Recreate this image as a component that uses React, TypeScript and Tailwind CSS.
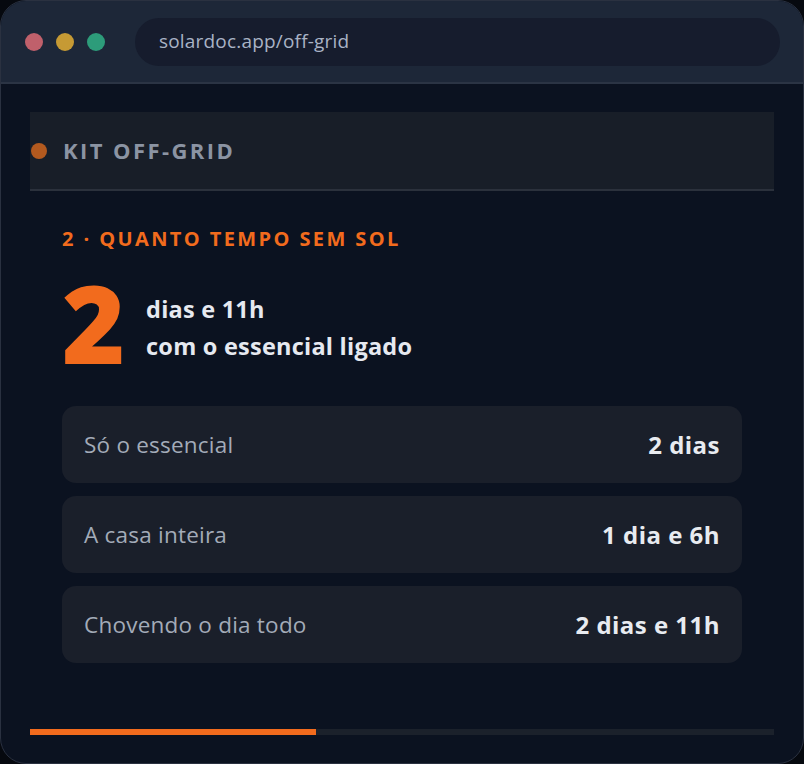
import React from "react";

const rows = [
  { label: "Só o essencial", value: "2 dias" },
  { label: "A casa inteira", value: "1 dia e 6h" },
  { label: "Chovendo o dia todo", value: "2 dias e 11h" },
];

const App = () => {
  const progress = 38.4;
  return (
    <div className="w-[804px] h-[764px] bg-[#06090f] font-['Open_Sans','Noto_Sans',sans-serif]">
      <div className="w-full h-full rounded-[26px] border border-[#2a3140] overflow-hidden flex flex-col bg-[#0b1220]">
        {/* title bar */}
        <div className="h-[83px] shrink-0 bg-[#1d2738] border-b-2 border-[#2b3444] flex items-center pl-[24px] pr-[23px]">
          <div className="flex items-center gap-[13px]">
            <span className="w-[18px] h-[18px] rounded-full bg-[#c0606b]" />
            <span className="w-[18px] h-[18px] rounded-full bg-[#c69a34]" />
            <span className="w-[18px] h-[18px] rounded-full bg-[#2d9c7a]" />
          </div>
          <div className="ml-[30px] flex-1 h-[48px] rounded-full bg-[#161c2d] flex items-center px-[24px] text-[19px] tracking-[0.01em] text-[#a9b3c5]">
            solardoc.app/off-grid
          </div>
        </div>

        {/* body */}
        <div className="flex-1 flex flex-col px-[29px] pt-[28px] pb-[28px]">
          <div className="h-[79px] bg-[#181e28] border-b-2 border-[#2b313c] flex items-center pl-[1px]">
            <span className="w-[16px] h-[16px] rounded-full bg-[#b35a1f]" />
            <span className="ml-[16px] text-[22px] font-bold tracking-[0.11em] text-[#8b94a3]">
              KIT OFF-GRID
            </span>
          </div>

          <div className="px-[32px] flex flex-col flex-1">
            <div className="mt-[38px] h-[20px] flex items-center text-[20px] font-bold tracking-[0.12em] text-[#f26b1d]">
              2 · QUANTO TEMPO SEM SOL
            </div>

            <div className="mt-[29px] flex items-center">
              <span className="text-[108px] font-extrabold leading-[90px] text-[#f26b1d] tracking-[-0.03em]">
                2
              </span>
              <div className="ml-[24px] pt-[10px] text-[23.5px] font-bold leading-[37px] tracking-[0.01em] text-[#e6e9f0]">
                <div>dias e 11h</div>
                <div>com o essencial ligado</div>
              </div>
            </div>

            <div className="mt-[38px] flex flex-col gap-[13px]">
              {rows.map((r) => (
                <div
                  key={r.label}
                  className="h-[77px] rounded-[14px] bg-[#1a1f2a] flex items-center justify-between px-[22px]"
                >
                  <span className="text-[22.5px] tracking-[0.01em] text-[#a3abb8]">{r.label}</span>
                  <span className="text-[24px] font-bold tracking-[0.02em] text-[#e8ebf0]">{r.value}</span>
                </div>
              ))}
            </div>
          </div>

          <div className="mt-auto h-[6px] bg-[#1b212b]">
            <div className="h-full bg-[#f26b1d]" style={{ width: `${progress}%` }} />
          </div>
        </div>
      </div>
    </div>
  );
};

export default App;
